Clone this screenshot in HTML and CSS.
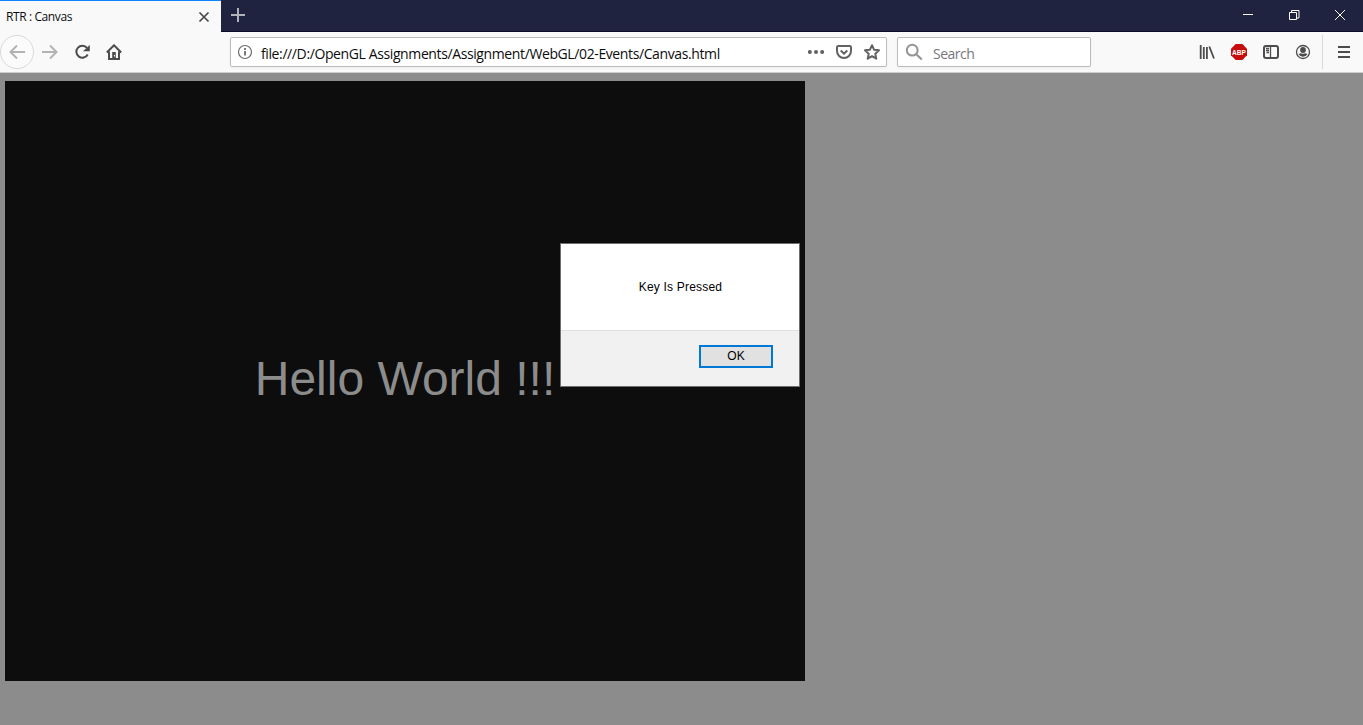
FILE: index.html
```html
<!DOCTYPE html>
<html lang="en">
<head>
<meta charset="utf-8">
<title>RTR : Canvas</title>
<link rel="stylesheet" href="styles.css">
</head>
<body>
<div class="browser">
  <header class="tabstrip">
    <div class="tab">
      <span class="tab-title">RTR : Canvas</span>
      <svg class="tab-close" width="16" height="16" viewBox="0 0 16 16"><path d="M3.500 3.500l9 9M12.500 3.500l-9 9"/></svg>
    </div>
    <svg class="new-tab" width="16" height="16" viewBox="0 0 16 16"><path d="M8 1v14M1 8h14"/></svg>
    <div class="window-controls">
      <svg width="46" height="30" viewBox="0 0 46 30"><path d="M18 14.500h10"/></svg>
      <svg width="46" height="30" viewBox="0 0 46 30"><path d="M18.500 12.500h7v7h-7zM20.500 12.500v-2h7.500v7.500h-2.500"/></svg>
      <svg width="46" height="30" viewBox="0 0 46 30"><path d="M18 10l10 10M28 10l-10 10"/></svg>
    </div>
  </header>
  <nav class="toolbar">
    <div class="nav-buttons">
      <span class="back"><svg class="icon dim" width="16" height="16" viewBox="0 0 16 16"><path d="M16 8H1.500M8 1.500L1.500 8L8 14.500"/></svg></span>
      <svg class="icon dim" width="16" height="16" viewBox="0 0 16 16"><path d="M0 8h14.500M8 1.500L14.500 8L8 14.500"/></svg>
      <svg class="icon" width="16" height="16" viewBox="0 0 16 16"><path d="M13 3.900A6 6 0 1 0 13.700 10.500"/><path class="solid" d="M15.800 1v6.200H9z"/></svg>
      <svg class="icon" width="16" height="16" viewBox="0 0 16 16"><path d="M.8 8.500L8 1.300l7.200 7.200M3 7.500v7.500h10V7.500"/><path class="solid" d="M6.200 8h3.600v7.500H6.200z"/><path class="knob" d="M8 11h1v1.500H8z"/></svg>
    </div>
    <div class="urlbar">
      <svg class="info" width="16" height="16" viewBox="0 0 16 16"><circle cx="8" cy="8" r="6.500"/><path d="M8 7v4.500M8 4v2"/></svg>
      <span class="url">file:///D:/OpenGL Assignments/Assignment/WebGL/02-Events/Canvas.html</span>
      <div class="url-actions">
        <svg class="icon" width="16" height="16" viewBox="0 0 16 16"><g class="solid"><circle cx="1.900" cy="8" r="2"/><circle cx="8" cy="8" r="2"/><circle cx="14.100" cy="8" r="2"/></g></svg>
        <svg class="icon" width="16" height="16" viewBox="0 0 16 16"><path d="M2.300 2h11.400q1.300 0 1.300 1.300v3.700a7 7 0 0 1-14 0V3.300Q1 2 2.300 2zM4.700 6.500L8 9.700l3.300-3.200"/></svg>
        <svg class="icon" width="16" height="16" viewBox="0 0 16 16"><path stroke-linejoin="round" d="M8 1.200l2 4.500 5 .6-3.700 3.400 1 5L8 12.200l-4.300 2.500 1-5L1 6.300l5-.6z"/></svg>
      </div>
    </div>
    <div class="searchbar">
      <svg class="search-icon" width="18" height="18" viewBox="0 0 18 18"><circle cx="7.200" cy="7.200" r="5.400"/><path d="M11.200 11.200l5.600 5.300"/></svg>
      <span class="placeholder">Search</span>
    </div>
    <div class="tools">
      <svg class="icon library" width="16" height="16" viewBox="0 0 16 16"><path d="M1.700 1v14M4.800 3v12M7.900 3v12M10.300 2.500L15 14.500"/></svg>
      <svg class="abp" width="16" height="16" viewBox="0 0 16 16"><path d="M4.700 0h6.600L16 4.700v6.600L11.300 16H4.700L0 11.300V4.700z"/><text transform="translate(8 11) scale(.82 1)">ABP</text></svg>
      <svg class="icon" width="16" height="16" viewBox="0 0 16 16"><rect x="1" y="2" width="14" height="12" rx="2"/><path class="thin" d="M7.500 2v12M3 4.500h3M3 6.500h3M3.500 8.500H6"/></svg>
      <svg class="icon" width="16" height="16" viewBox="0 0 16 16"><circle class="thin" cx="8" cy="8" r="6.500"/><circle class="solid" cx="8" cy="6" r="2.900"/><path class="solid" d="M3.500 10q1.800-.8 2.500-.8 2 1.300 4 0 .7 0 2.500.8-1.500 2.700-4.500 2.700T3.500 10z"/></svg>
    </div>
    <div class="menu"><svg class="icon" width="12" height="14" viewBox="0 0 12 14"><path d="M0 2h12M0 7h12M0 12h12"/></svg></div>
  </nav>
  <main class="page">
    <div class="canvas"><span class="hello">Hello World !!!</span></div>
    <div class="dialog">
      <div class="dialog-body">Key Is Pressed</div>
      <div class="dialog-footer"><button class="ok">OK</button></div>
    </div>
  </main>
</div>
</body>
</html>
```
FILE: styles.css
```css
* { box-sizing: border-box; }
body { margin: 0; overflow: hidden; font-family: "Open Sans", "Noto Sans", sans-serif; }
svg { display: block; flex: none; fill: none; }
.browser { display: flex; flex-direction: column; height: 725px; }

.tabstrip { display: flex; height: 32px; background: #202340; border-bottom: 1px solid #0d0b2c; }
.tab { display: flex; align-items: center; justify-content: space-between; width: 221px; height: 32px; padding: 0 9px 0 6px; background: #f9f9f9; border-top: 1px solid #0a84ff; }
.tab-title { font-size: 12px; letter-spacing: -0.4px; color: #0c0c0d; white-space: nowrap; }
.tab-close { stroke: #4a4a4b; stroke-width: 1.700; }
.new-tab { margin: 7px 0 0 9px; stroke: #b1b2bc; stroke-width: 2; }
.window-controls { display: flex; margin-left: auto; stroke: #fff; stroke-width: 1; }

.toolbar { display: flex; align-items: center; height: 41px; background: #f9f9fa; border-bottom: 1px solid #cecece; }
.icon { stroke: #4c4c4d; stroke-width: 2; }
.icon .solid { fill: #4c4c4d; stroke: none; }
.icon .thin { stroke-width: 1.300; }
.icon .knob { fill: #f9f9fa; stroke: none; }
.icon.dim { stroke: #b3b3b3; }
.icon.library { stroke-width: 1.800; }
.nav-buttons { display: flex; align-items: center; gap: 16px; width: 230px; }
.back { display: flex; align-items: center; justify-content: center; width: 34px; height: 34px; margin-right: -8px; border: 1px solid #d9d9da; border-radius: 50%; background: #fbfbfb; }
.urlbar, .searchbar { display: flex; align-items: center; height: 30px; background: #fff; border: 1px solid #bcbcbc; border-radius: 2px; box-shadow: 0 1px 3px #0000000d; }
.urlbar { width: 657px; padding: 0 6px; }
.info { stroke: #6b6b6c; stroke-width: 1.200; }
.info path { stroke-width: 1.800; }
.url { margin-left: 8px; padding-top: 2px; font-size: 14px; letter-spacing: -0.388px; color: #0c0c0d; white-space: nowrap; }
.url-actions { display: flex; gap: 12px; margin-left: auto; }
.url-actions .icon { stroke: #626263; }
.url-actions .icon .solid { fill: #626263; stroke: none; }
.searchbar { width: 194px; margin-left: 10px; padding: 0 7px; gap: 10px; }
.search-icon { stroke: #949495; stroke-width: 2; }
.placeholder { padding-top: 2px; font-size: 14px; letter-spacing: -0.700px; letter-spacing: -0.500px; color: #77777a; }
.tools { display: flex; gap: 16px; margin-left: auto; padding-right: 11px; }
.abp path { fill: #c70d0b; }
.abp text { fill: #fff; font: bold 8px "Liberation Sans", sans-serif; text-anchor: middle; }
.menu { display: flex; align-items: center; justify-content: center; width: 41px; height: 34px; padding-left: 2px; border-left: 1px solid #d9d9da; }

.page { position: relative; flex: 1; padding: 8px 5px; background: #8c8c8c; }
.canvas { display: flex; align-items: center; justify-content: center; width: 800px; height: 600px; padding-bottom: 5px; background: #0d0d0d; font: 48px "Liberation Sans", Arial, sans-serif; color: #8c8c8c; }
.dialog { position: absolute; left: 560px; top: 170px; display: flex; flex-direction: column; width: 240px; height: 144px; border: 1px solid #6e6e6e; background: #f1f1f1; font: 12px "Liberation Sans", Arial, sans-serif; color: #000; }
.dialog-body { display: flex; align-items: center; justify-content: center; height: 87px; padding-left: 1px; background: #fff; border-bottom: 1px solid #dfdfdf; letter-spacing: 0.200px; }
.dialog-footer { display: flex; justify-content: flex-end; padding: 14px 26px 0; }
.ok { width: 74px; height: 23px; padding: 0 0 2px; border: 2px solid #0078d7; background: #e1e1e1; color: #000; font: inherit; }
```
